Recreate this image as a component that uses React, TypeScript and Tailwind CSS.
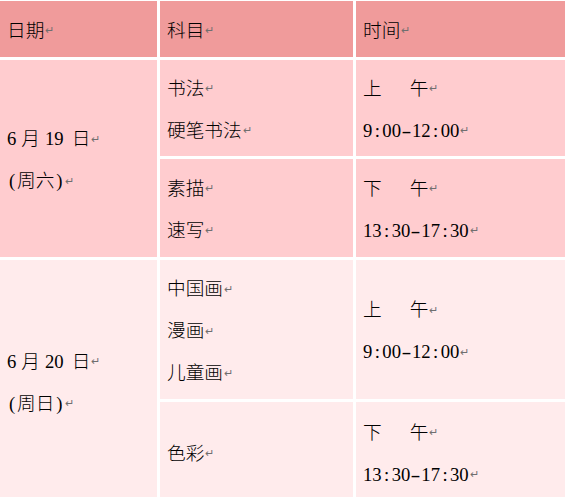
import React from "react";

const Mark = () => (
  <span className="ml-[1px] font-['DejaVu_Sans',sans-serif] text-[11px] leading-none text-[#6f6f6f]">↵</span>
);

const Colon = () => <span className="inline-block w-[10px] text-center">:</span>;
const Dash = () => <span className="inline-block w-[11px] scale-x-[1.6] text-center">-</span>;
const Gap = ({ w }: { w: string }) => <span className={`inline-block ${w}`}> </span>;

function Time({ a, b, c, d }: { a: string; b: string; c: string; d: string }) {
  return (
    <>
      {a}
      <Colon />
      {b}
      <Dash />
      {c}
      <Colon />
      {d}
    </>
  );
}

function Line({ children }: { children: React.ReactNode }) {
  return <div className="flex h-[42px] items-center whitespace-pre leading-normal">{children}</div>;
}

function Cell({ bg, children, span }: { bg: string; children: React.ReactNode; span?: boolean }) {
  return (
    <div className={`${bg} ${span ? "row-span-2" : ""} flex flex-col justify-center pl-[7px] pt-[3px]`}>
      {children}
    </div>
  );
}

function DateLine({ day }: { day: string }) {
  return (
    <Line>
      6<Gap w="w-[5px]" />月<Gap w="w-[5px]" />
      {day}
      <Gap w="w-[8px]" />日
      <Mark />
    </Line>
  );
}

function WeekLine({ d }: { d: string }) {
  return (
    <Line>
      <span className="inline-block w-[10px] text-center">(</span>周{d}
      <span className="inline-block w-[10px] text-center">)</span>
      <Mark />
    </Line>
  );
}

export default function App() {
  const H = "bg-[#f09b9b]";
  const R1 = "bg-[#ffcccf]";
  const R2 = "bg-[#ffebec]";
  return (
    <div className="h-[497px] w-[565px] overflow-hidden bg-white pt-[1px] font-['Liberation_Serif','Noto_Sans_CJK_SC',serif] text-[18.67px] font-light text-black">
      <div className="grid grid-cols-[157px_193px_1fr] grid-rows-[56px_96px_98px_139px_100px] gap-[3px]">
        <Cell bg={H}>
          <Line>
            日期
            <Mark />
          </Line>
        </Cell>
        <Cell bg={H}>
          <Line>
            科目
            <Mark />
          </Line>
        </Cell>
        <Cell bg={H}>
          <Line>
            时间
            <Mark />
          </Line>
        </Cell>

        <Cell bg={R1} span>
          <DateLine day="19" />
          <WeekLine d="六" />
        </Cell>
        <Cell bg={R1}>
          <Line>
            书法
            <Mark />
          </Line>
          <Line>
            硬笔书法
            <Mark />
          </Line>
        </Cell>
        <Cell bg={R1}>
          <Line>
            上      午
            <Mark />
          </Line>
          <Line>
            <Time a="9" b="00" c="12" d="00" />
            <Mark />
          </Line>
        </Cell>
        <Cell bg={R1}>
          <Line>
            素描
            <Mark />
          </Line>
          <Line>
            速写
            <Mark />
          </Line>
        </Cell>
        <Cell bg={R1}>
          <Line>
            下      午
            <Mark />
          </Line>
          <Line>
            <Time a="13" b="30" c="17" d="30" />
            <Mark />
          </Line>
        </Cell>

        <Cell bg={R2} span>
          <DateLine day="20" />
          <WeekLine d="日" />
        </Cell>
        <Cell bg={R2}>
          <Line>
            中国画
            <Mark />
          </Line>
          <Line>
            漫画
            <Mark />
          </Line>
          <Line>
            儿童画
            <Mark />
          </Line>
        </Cell>
        <Cell bg={R2}>
          <Line>
            上      午
            <Mark />
          </Line>
          <Line>
            <Time a="9" b="00" c="12" d="00" />
            <Mark />
          </Line>
        </Cell>
        <Cell bg={R2}>
          <Line>
            色彩
            <Mark />
          </Line>
        </Cell>
        <Cell bg={R2}>
          <Line>
            下      午
            <Mark />
          </Line>
          <Line>
            <Time a="13" b="30" c="17" d="30" />
            <Mark />
          </Line>
        </Cell>
      </div>
    </div>
  );
}
